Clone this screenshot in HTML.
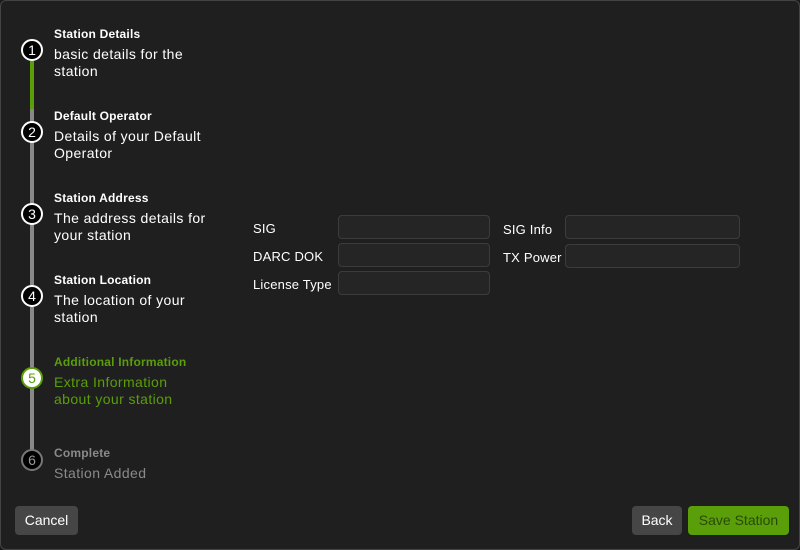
<!DOCTYPE html><html><head><style>
body{margin:0;width:800px;height:550px;background:#1a1a1a;font-family:"Liberation Sans",sans-serif;overflow:hidden}
.win{position:absolute;left:0;top:0;width:798px;height:548px;border:1px solid #444;border-radius:6px;background:#1f1f1f}
.ln{position:absolute;left:29px;width:4px;background:#888}
.c{position:absolute;left:20px;width:18px;height:18px;border:2px solid #fff;border-radius:50%;background:#000;color:#fff;font-size:14px;text-align:center;line-height:18px}
.t{position:absolute;left:53px;font-weight:bold;font-size:12px;color:#fff;letter-spacing:.2px}
.d{position:absolute;left:53px;font-size:14px;color:#fff;line-height:17px;width:155px;letter-spacing:.4px}
.l{position:absolute;font-size:13px;color:#fff;letter-spacing:.2px}
.i{position:absolute;width:152px;height:24px;border:1px solid #3c3c3c;border-radius:4px;background:#252525;box-sizing:border-box}
.b{position:absolute;top:505px;height:29px;border-radius:4px;font-size:14px;line-height:29px;text-align:center;background:#464646;color:#fff}
</style></head><body><div class="win">
<div class="ln" style="top:60px;height:48px;background:#5a9e0a"></div>
<div class="ln" style="top:108px;height:350px"></div>
<div class="c" style="top:38px">1</div>
<div class="c" style="top:120px">2</div>
<div class="c" style="top:202px">3</div>
<div class="c" style="top:284px">4</div>
<div class="c" style="top:366px;background:#fff;border-color:#5a9e0a;color:#5a9e0a">5</div>
<div class="c" style="top:448px;border-color:#777;color:#999">6</div>
<div class="t" style="top:26px">Station Details</div><div class="d" style="top:45px">basic details for the station</div>
<div class="t" style="top:108px">Default Operator</div><div class="d" style="top:127px">Details of your Default Operator</div>
<div class="t" style="top:190px">Station Address</div><div class="d" style="top:209px">The address details for your station</div>
<div class="t" style="top:272px">Station Location</div><div class="d" style="top:291px">The location of your station</div>
<div class="t" style="top:354px;color:#5a9e0a">Additional Information</div><div class="d" style="top:373px;color:#5a9e0a">Extra Information<br>about your station</div>
<div class="t" style="top:445px;color:#8a8a8a">Complete</div><div class="d" style="top:464px;color:#8a8a8a">Station Added</div>
<div class="l" style="left:252px;top:220px">SIG</div><div class="i" style="left:337px;top:214px"></div>
<div class="l" style="left:502px;top:221px">SIG Info</div><div class="i" style="left:564px;top:214px;width:175px"></div>
<div class="l" style="left:252px;top:248px">DARC DOK</div><div class="i" style="left:337px;top:242px"></div>
<div class="l" style="left:502px;top:249px">TX Power</div><div class="i" style="left:564px;top:243px;width:175px"></div>
<div class="l" style="left:252px;top:276px">License Type</div><div class="i" style="left:337px;top:270px"></div>
<div class="b" style="left:14px;width:63px">Cancel</div>
<div class="b" style="left:631px;width:50px">Back</div>
<div class="b" style="left:687px;width:101px;background:#5a9e0a;color:#2a4a08">Save Station</div>
</div></body></html>
